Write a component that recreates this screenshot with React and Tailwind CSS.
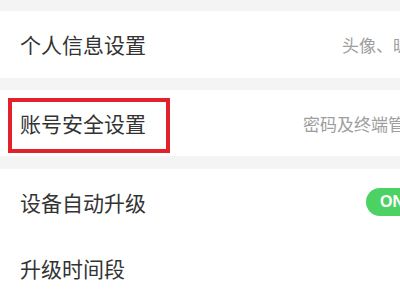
export default function App() {
  const font = { fontFamily: '"Noto Sans CJK SC", "Noto Sans", sans-serif' };
  return (
    <div className="w-[400px] h-[300px] overflow-hidden bg-[#f4f4f4]" style={font}>
      <div className="w-[442px] pt-[11px]">
        <div className="h-[67px] bg-white px-5 flex items-center justify-between">
          <span className="text-[21px] text-[#333333] leading-none">个人信息设置</span>
          <span className="text-[17px] text-[#9e9e9e] leading-none -mr-[5px]">头像、昵称</span>
        </div>
        <div className="h-[12px]" />
        <div className="relative h-[66px] bg-white px-5 flex items-center justify-between">
          <span className="text-[21px] text-[#333333] leading-none">账号安全设置</span>
          <span className="text-[17px] text-[#9e9e9e] leading-none">密码及终端管理</span>
          <div className="absolute left-[8px] top-[8px] w-[162px] h-[55px] border-4 border-[#e3212b]" />
        </div>
        <div className="h-[13px]" />
        <div className="bg-white">
          <div className="h-[66px] px-5 flex items-center justify-between">
            <span className="text-[21px] text-[#333333] leading-none">设备自动升级</span>
            <div className="w-[56px] h-[28px] rounded-full bg-[#4cd263] flex items-center pl-[14px] -ml-[2px]">
              <span className="text-white font-bold text-[16px] leading-none" style={{ fontFamily: '"Liberation Sans", sans-serif' }}>ON</span>
            </div>
          </div>
          <div className="h-[66px] px-5 flex items-center">
            <span className="text-[21px] text-[#333333] leading-none">升级时间段</span>
          </div>
        </div>
      </div>
    </div>
  );
}
